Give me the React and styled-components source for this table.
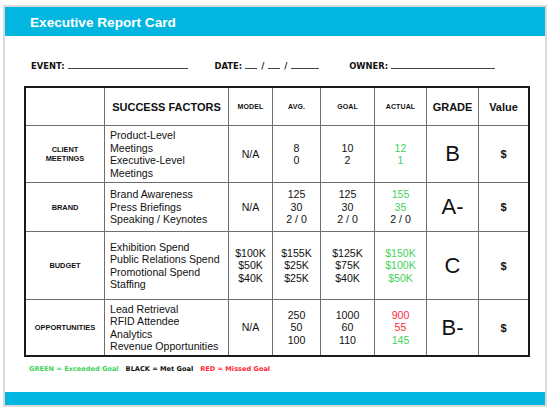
import React from "react";
import styled, { createGlobalStyle } from "styled-components";

const Global = createGlobalStyle`
  html, body { margin: 0; padding: 0; background: #ffffff; }
  body { font-family: "Liberation Sans", Arial, sans-serif; color: #111; }
`;

const GREEN = "#44d35e";
const RED = "#ff2a3a";
const BLUE = "#02b6e0";

const Card = styled.div`
  margin: 5px 0 0 3px;
  width: 544px;
  border: 2px solid #dadada;
  box-sizing: border-box;
  display: flex;
  flex-direction: column;
  background: #fff;
`;

const TitleBar = styled.div`
  height: 29px;
  background: ${BLUE};
  display: flex;
  align-items: center;
  padding: 2px 0 0 25px;
  box-sizing: border-box;
  color: #fff;
  font-weight: bold;
  font-size: 13.6px;
`;

const Body = styled.div`
  padding: 0 14px 0 19px;
  height: 356px;
  box-sizing: border-box;
`;

const FormRow = styled.div`
  margin-top: 23px;
  padding-left: 7px;
  display: flex;
  align-items: baseline;
  font-family: "DejaVu Sans", Verdana, sans-serif;
  font-weight: bold;
  font-size: 8.4px;
  line-height: 12px;
  color: #111;
`;

const Field = styled.div`
  display: flex;
  align-items: baseline;
  margin-left: ${(p) => p.$offset || 0}px;
  gap: 3px;
`;

const Blank = styled.span`
  display: inline-block;
  width: ${(p) => p.$w}px;
  border-bottom: 1px solid #444;
  height: 9px;
`;

const Slash = styled.span`
  font-weight: bold;
  margin: 0 1px;
`;

const Grid = styled.div`
  margin-top: 14px;
  width: 506px;
  box-sizing: border-box;
  border: 2px solid #1a1a1a;
  background: #6e6e6e;
  display: grid;
  grid-template-columns: 78px 123px 43px 47px 53px 51px 51px 49px;
  grid-template-rows: 37px 56px 48px 67px 55px;
  gap: 1px;
`;

const Cell = styled.div`
  background: #fff;
  display: flex;
  flex-direction: column;
  justify-content: center;
  align-items: ${(p) => (p.$left ? "flex-start" : "center")};
  padding-left: ${(p) => (p.$left ? "5px" : "0")};
  text-align: ${(p) => (p.$left ? "left" : "center")};
  white-space: nowrap;
`;

const HeadText = styled.div`
  font-weight: bold;
  font-size: ${(p) => (p.$small ? "7px" : "11px")};
  letter-spacing: ${(p) => (p.$small ? "0.1px" : "0")};
`;

const CatText = styled.div`
  font-weight: bold;
  font-size: 7.4px;
  line-height: 9px;
  text-align: center;
`;

const Line = styled.div`
  font-size: 10.6px;
  line-height: 12.5px;
  color: ${(p) => (p.$c === "g" ? GREEN : p.$c === "r" ? RED : "#111")};
`;

const Grade = styled.div`
  font-size: 22px;
  line-height: 24px;
`;

const Dollar = styled.div`
  font-weight: bold;
  font-size: 11px;
`;

const Legend = styled.div`
  margin-top: 8px;
  padding-left: 5px;
  display: flex;
  gap: 7px;
  font-family: "DejaVu Sans", Verdana, sans-serif;
  font-weight: bold;
  font-size: 6.6px;
  line-height: 9px;
`;

const LegendItem = styled.span`
  color: ${(p) => p.$color};
`;

const BottomBar = styled.div`
  height: 13px;
  background: ${BLUE};
`;

const rows = [
  {
    cat: ["CLIENT", "MEETINGS"],
    factors: ["Product-Level", "Meetings", "Executive-Level", "Meetings"],
    model: ["N/A"],
    avg: ["8", "0"],
    goal: ["10", "2"],
    actual: [["12", "g"], ["1", "g"]],
    grade: "B",
  },
  {
    cat: ["BRAND"],
    factors: ["Brand Awareness", "Press Briefings", "Speaking / Keynotes"],
    model: ["N/A"],
    avg: ["125", "30", "2 / 0"],
    goal: ["125", "30", "2 / 0"],
    actual: [["155", "g"], ["35", "g"], ["2 / 0", "k"]],
    grade: "A-",
  },
  {
    cat: ["BUDGET"],
    factors: ["Exhibition Spend", "Public Relations Spend", "Promotional Spend", "Staffing"],
    model: ["$100K", "$50K", "$40K"],
    avg: ["$155K", "$25K", "$25K"],
    goal: ["$125K", "$75K", "$40K"],
    actual: [["$150K", "g"], ["$100K", "g"], ["$50K", "g"]],
    grade: "C",
  },
  {
    cat: ["OPPORTUNITIES"],
    factors: ["Lead Retrieval", "RFID Attendee", "Analytics", "Revenue Opportunities"],
    model: ["N/A"],
    avg: ["250", "50", "100"],
    goal: ["1000", "60", "110"],
    actual: [["900", "r"], ["55", "r"], ["145", "g"]],
    grade: "B-",
  },
];

const headers = [
  ["", false],
  ["SUCCESS FACTORS", false],
  ["MODEL", true],
  ["AVG.", true],
  ["GOAL", true],
  ["ACTUAL", true],
  ["GRADE", false],
  ["Value", false],
];

export default function App() {
  return (
    <>
      <Global />
      <Card>
        <TitleBar>Executive Report Card</TitleBar>
        <Body>
          <FormRow>
            <Field>
              EVENT: <Blank $w={120} />
            </Field>
            <Field $offset={27}>
              DATE: <Blank $w={12} />
              <Slash>/</Slash>
              <Blank $w={12} />
              <Slash>/</Slash>
              <Blank $w={28} />
            </Field>
            <Field $offset={30}>
              OWNER: <Blank $w={104} />
            </Field>
          </FormRow>
          <Grid>
            {headers.map(([t, small], i) => (
              <Cell key={"h" + i}>
                <HeadText $small={small}>{t}</HeadText>
              </Cell>
            ))}
            {rows.map((r, ri) => (
              <React.Fragment key={ri}>
                <Cell>
                  <CatText>
                    {r.cat.map((c) => (
                      <div key={c}>{c}</div>
                    ))}
                  </CatText>
                </Cell>
                <Cell $left>
                  {r.factors.map((f, i) => (
                    <Line key={i}>{f}</Line>
                  ))}
                </Cell>
                <Cell>
                  {r.model.map((v, i) => (
                    <Line key={i}>{v}</Line>
                  ))}
                </Cell>
                <Cell>
                  {r.avg.map((v, i) => (
                    <Line key={i}>{v}</Line>
                  ))}
                </Cell>
                <Cell>
                  {r.goal.map((v, i) => (
                    <Line key={i}>{v}</Line>
                  ))}
                </Cell>
                <Cell>
                  {r.actual.map(([v, c], i) => (
                    <Line key={i} $c={c}>
                      {v}
                    </Line>
                  ))}
                </Cell>
                <Cell>
                  <Grade>{r.grade}</Grade>
                </Cell>
                <Cell>
                  <Dollar>$</Dollar>
                </Cell>
              </React.Fragment>
            ))}
          </Grid>
          <Legend>
            <LegendItem $color={GREEN}>GREEN = Exceeded Goal</LegendItem>
            <LegendItem $color="#111">BLACK = Met Goal</LegendItem>
            <LegendItem $color={RED}>RED = Missed Goal</LegendItem>
          </Legend>
        </Body>
        <BottomBar />
      </Card>
    </>
  );
}
